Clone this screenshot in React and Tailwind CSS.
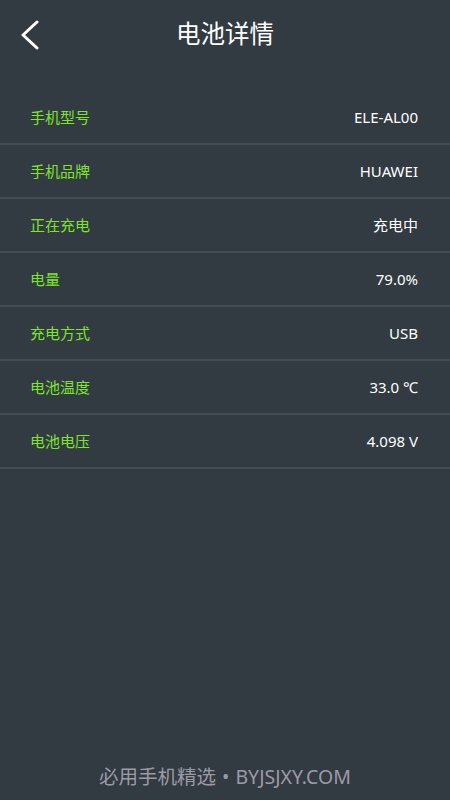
export default function App() {
  const rows = [
    ["手机型号", "ELE-AL00"],
    ["手机品牌", "HUAWEI"],
    ["正在充电", "充电中"],
    ["电量", "79.0%"],
    ["充电方式", "USB"],
    ["电池温度", "33.0 ℃"],
    ["电池电压", "4.098 V"],
  ];
  const font = { fontFamily: '"Noto Sans", "Noto Sans CJK SC", sans-serif' };
  return (
    <div className="h-[800px] w-[450px] bg-[#323b42] flex flex-col" style={font}>
      <div className="relative h-[70px] flex items-center justify-center">
        <svg className="absolute left-[18px] top-[20px]" width="24" height="30" viewBox="0 0 24 30">
          <path d="M19 2 L5 15 L19 28" fill="none" stroke="#ffffff" strokeWidth="3" strokeLinecap="round" strokeLinejoin="round" />
        </svg>
        <span className="text-white text-[24.5px] leading-none -mt-[2px]">电池详情</span>
      </div>
      <div className="mt-[21px] flex flex-col">
        {rows.map(([k, v]) => (
          <div key={k} className="h-[54px] flex items-center justify-between pl-[30px] pr-[32px] border-b-2 border-[#434c53]">
            <span className="text-[#7de52b] text-[15px]">{k}</span>
            <span className="text-white text-[15px]">{v}</span>
          </div>
        ))}
      </div>
      <div className="flex-1" />
      <div className="h-[33px] flex items-start justify-center">
        <span className="text-[#9d9aa6] text-[19.5px] leading-none whitespace-pre">必用手机精选<span className="mx-[6px]">•</span>BYJSJXY.COM</span>
      </div>
    </div>
  );
}
